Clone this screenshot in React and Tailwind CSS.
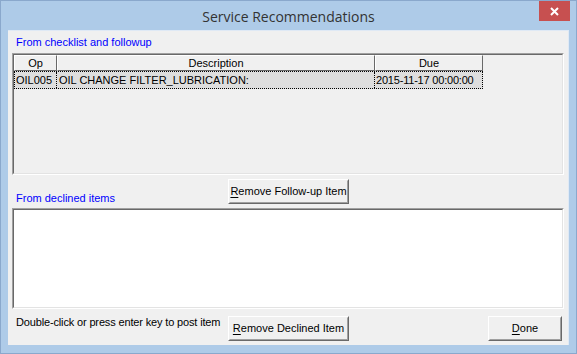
import React from 'react'

const ui = { fontFamily: '"Liberation Sans", Arial, sans-serif' }

// classic 3D borders
const sunken = 'border border-t-[#a0a0a0] border-l-[#a0a0a0] border-r-[#ffffff] border-b-[#ffffff]'
const sunkenInner = 'border border-t-[#696969] border-l-[#696969] border-r-[#e3e3e3] border-b-[#e3e3e3]'

function WinButton({ label, mnemonic, className = '' }) {
  const rest = label.slice(1)
  return (
    <div className={`border border-t-[#ffffff] border-l-[#ffffff] border-r-[#696969] border-b-[#696969] ${className}`}>
      <div className="h-full w-full border border-t-[#f0f0f0] border-l-[#f0f0f0] border-r-[#a0a0a0] border-b-[#a0a0a0] bg-[#f0f0f0] flex items-center justify-center text-[11px] text-black">
        <span>
          <span className="underline underline-offset-2">{mnemonic}</span>
          {rest}
        </span>
      </div>
    </div>
  )
}

function HeaderCell({ children, width }) {
  return (
    <div
      className={`${width} h-full border-t border-l border-t-white border-l-white border-r border-b border-r-[#696969] border-b-[#696969] flex items-center justify-center text-[11px] text-black bg-[#f0f0f0]`}
    >
      {children}
    </div>
  )
}

export default function App() {
  const columns = [
    { title: 'Op', width: 'w-[43px]' },
    { title: 'Description', width: 'w-[318px]' },
    { title: 'Due', width: 'w-[108px]' },
  ]

  return (
    <div className="w-[577px] h-[354px] bg-[#aecbe8] border border-[#8aa8cc] flex flex-col" style={ui}>
      {/* Title bar */}
      <div className="h-[29px] relative flex items-center justify-center shrink-0">
        <span className="text-[14px] text-[#333333] pt-[1px]" style={{ fontFamily: '"Open Sans", "Noto Sans", sans-serif' }}>
          Service Recommendations
        </span>
        <div className="absolute right-[6px] top-0 w-[31px] h-[20px] bg-[#c75050] flex items-center justify-center">
          <svg width="9" height="9" viewBox="0 0 9 9">
            <path d="M1 1 L8 8 M8 1 L1 8" stroke="white" strokeWidth="2" />
          </svg>
        </div>
      </div>

      {/* Client area */}
      <div className="mx-[7px] h-[315px] bg-[#f0f0f0] border-t border-r border-[#dfe9f5] flex flex-col px-[4px] shrink-0">
        <div className="h-[22px] flex items-center pl-[4px] pt-[1px] text-[11px] text-[#0000ff]">
          From checklist and followup
        </div>

        {/* list 1 */}
        <div className={`h-[122px] w-[552px] ${sunken}`}>
          <div className={`h-full w-full ${sunkenInner} bg-[#f0f0f0] flex flex-col`}>
            <div className="h-[16px] flex">
              {columns.map(c => (
                <HeaderCell key={c.title} width={c.width}>{c.title}</HeaderCell>
              ))}
            </div>
            <div className="h-[18px] w-[469px] flex border border-dotted border-black bg-[#dedede] text-[11px] text-black">
              <div className="w-[42px] pl-[1px] border-r border-dotted border-black flex items-center">OIL005</div>
              <div className="w-[318px] pl-[2px] border-r border-dotted border-black flex items-center">OIL CHANGE FILTER_LUBRICATION:</div>
              <div className="flex-1 pl-[1px] flex items-center tracking-[-0.2px]">2015-11-17 00:00:00</div>
            </div>
          </div>
        </div>

        {/* middle row */}
        <div className="h-[33px] flex items-start relative">
          <div className="absolute left-[4px] top-[15px] text-[11px] text-[#0000ff]">From declined items</div>
          <WinButton label="Remove Follow-up Item" mnemonic="R" className="ml-[216px] mt-[4px] w-[121px] h-[25px]" />
        </div>

        {/* list 2 */}
        <div className={`h-[101px] w-[552px] ${sunken}`}>
          <div className={`h-full w-full ${sunkenInner} bg-white`} />
        </div>

        {/* bottom row */}
        <div className="flex-1 flex items-start">
          <div className="w-[216px] pl-[4px] pt-[5px] text-[11px] text-black whitespace-nowrap tracking-[-0.15px]">
            Double-click or press enter key to post item
          </div>
          <WinButton label="Remove Declined Item" mnemonic="R" className="mt-[7px] w-[121px] h-[25px]" />
          <WinButton label="Done" mnemonic="D" className="ml-[139px] mt-[7px] w-[74px] h-[25px]" />
        </div>
      </div>
    </div>
  )
}
